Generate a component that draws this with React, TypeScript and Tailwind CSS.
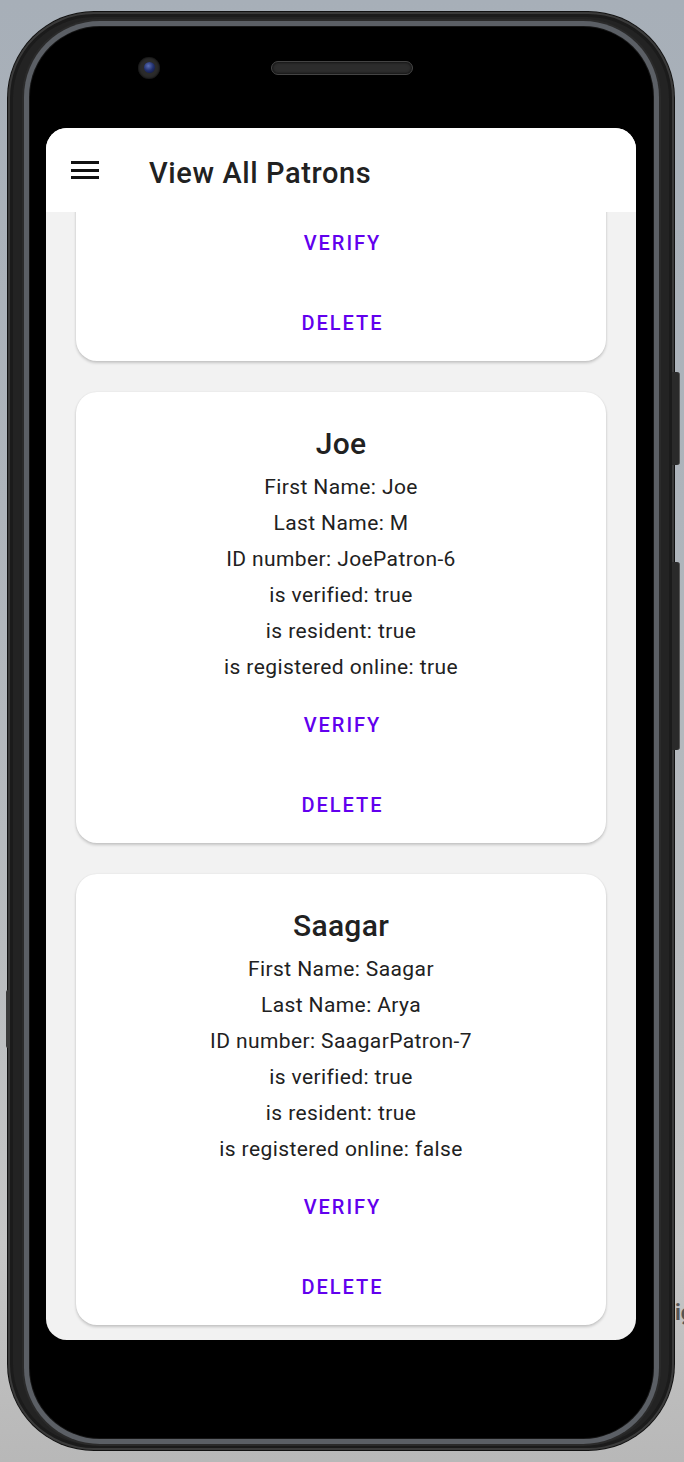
import React from "react";

type Patron = {
  title: string;
  first: string;
  last: string;
  id: string;
  verified: boolean;
  resident: boolean;
  online: boolean;
};

const patrons: Patron[] = [
  { title: "Lisa", first: "Lisa", last: "K", id: "LisaPatron-5", verified: true, resident: true, online: true },
  { title: "Joe", first: "Joe", last: "M", id: "JoePatron-6", verified: true, resident: true, online: true },
  { title: "Saagar", first: "Saagar", last: "Arya", id: "SaagarPatron-7", verified: true, resident: true, online: false },
];

function Card({ p }: { p: Patron }) {
  const lines = [
    `First Name: ${p.first}`,
    `Last Name: ${p.last}`,
    `ID number: ${p.id}`,
    `is verified: ${p.verified}`,
    `is resident: ${p.resident}`,
    `is registered online: ${p.online}`,
  ];
  return (
    <div className="bg-white rounded-[21px] shadow-[0_2px_3px_rgba(0,0,0,0.18),0_0_2px_rgba(0,0,0,0.08)] pt-[34px] pb-[13px] flex flex-col items-center text-[#212121]">
      <div className="text-[30px] leading-[36px] font-medium tracking-[0.3px]">{p.title}</div>
      <div className="mt-[7px] flex flex-col items-center">
        {lines.map((l) => (
          <div key={l} className="text-[21px] leading-[36px] tracking-[0.4px]">
            {l}
          </div>
        ))}
      </div>
      <div className="mt-[15px] h-[50px] pl-[3px] flex items-center justify-center text-[20px] font-medium tracking-[2px] text-[#6200ee]">
        VERIFY
      </div>
      <div className="mt-[30px] h-[50px] pl-[3px] flex items-center justify-center text-[20px] font-medium tracking-[2px] text-[#6200ee]">
        DELETE
      </div>
    </div>
  );
}

export default function App() {
  return (
    <div
      className="relative w-[684px] h-[1462px] overflow-hidden pt-[12px] pl-[8px] bg-[linear-gradient(180deg,#a7afb8_0%,#aeb4bb_35%,#b9bcbf_65%,#c6c6c6_85%,#b8b8b8_100%)]"
      style={{ fontFamily: "Roboto, 'Noto Sans', sans-serif" }}
    >
      {/* background text peeking at right */}
      <span className="absolute left-[675px] top-[1302px] text-[22px] font-bold text-[#555] leading-none">ig</span>

      {/* side buttons */}
      <div className="absolute left-[672px] top-[372px] w-[8px] h-[93px] rounded-r-[3px] bg-[#2a2a2a] border-r border-[#555]" />
      <div className="absolute left-[672px] top-[562px] w-[8px] h-[188px] rounded-r-[3px] bg-[#2a2a2a] border-r border-[#555]" />
      <div className="absolute left-[6px] top-[990px] w-[4px] h-[58px] rounded-l-[2px] bg-[#3a3a3a]" />

      {/* phone body */}
      <div className="w-[666px] h-[1438px] rounded-[86px] bg-[#232323] pt-[15px] pb-[12px] pl-[22px] pr-[21px] shadow-[0_0_0_1px_#111,inset_0_0_0_2px_#3a3a3a,inset_0_0_0_5px_#1b1b1b]">
        <div className="w-full h-full rounded-[70px] bg-black flex flex-col shadow-[0_0_0_1px_#151515,0_0_0_6px_#5b5f65,0_0_0_8px_#2a2a2a]">
          {/* top bezel: camera + speaker */}
          <div className="h-[101px] pb-[20px] pl-[108px] flex items-center">
            <div className="w-[22px] h-[22px] rounded-full bg-[#2b2b2b] flex items-center justify-center shadow-[inset_0_0_3px_#000]">
              <div className="w-[11px] h-[11px] rounded-full bg-[radial-gradient(circle_at_40%_35%,#5b6fb5_0%,#22306e_50%,#0c1233_100%)]" />
            </div>
            <div className="ml-[111px] w-[142px] h-[14px] rounded-full bg-[#2c2c2c] border border-[#444] shadow-[inset_0_0_3px_#000]" />
          </div>

          {/* screen */}
          <div className="ml-[16px] w-[590px] h-[1212px] rounded-[21px] overflow-hidden bg-[#f2f2f2] flex flex-col">
            <div className="h-[84px] shrink-0 bg-white flex items-center pl-[25px] relative z-10">
              <div className="w-[28px] flex flex-col gap-[4.5px]">
                <div className="h-[3px] bg-[#111]" />
                <div className="h-[3px] bg-[#111]" />
                <div className="h-[3px] bg-[#111]" />
              </div>
              <div className="ml-[50px] mt-[6px] text-[29px] font-medium tracking-[0.6px] text-[#212121] leading-none">
                View All Patrons
              </div>
            </div>
            <div className="flex-1 overflow-hidden px-[30px]">
              <div className="-mt-[302px] flex flex-col gap-[31px]">
                {patrons.map((p) => (
                  <Card key={p.id} p={p} />
                ))}
              </div>
            </div>
          </div>
        </div>
      </div>
    </div>
  );
}
